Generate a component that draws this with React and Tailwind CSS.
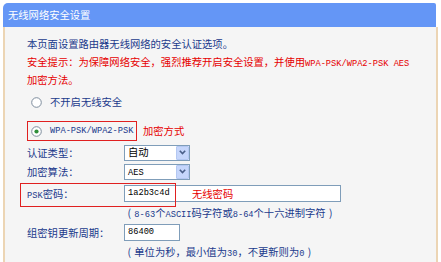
import React from "react";

const L = ({ children }) => (
  <span className="font-['Liberation_Mono',monospace] text-[8.7px] leading-none">{children}</span>
);

const P = ({ children }) => (
  <span className="inline-block w-[10.3px] text-center">{children}</span>
);

const Radio = ({ checked }) => (
  <svg width="11" height="11" viewBox="0 0 11 11" className="shrink-0">
    <circle cx="5.5" cy="5.5" r="4.8" fill="#ffffff" stroke="#7d8c9c" strokeWidth="1" />
    {checked && <circle cx="5.5" cy="5.5" r="2.1" fill="#2f8f3a" />}
  </svg>
);

const Sel = ({ children }) => (
  <div className="w-[66px] h-[16px] border border-[#7f9db9] bg-white flex items-center">
    <span className="flex-1 pl-[3px] text-black leading-none">{children}</span>
    <div className="w-[13px] h-[14px] bg-[#c6d6fb] border border-[#b4c8f2] rounded-[1px] flex items-center justify-center">
      <svg width="7" height="5" viewBox="0 0 7 5">
        <path d="M0.8 0.8 L3.5 3.6 L6.2 0.8" fill="none" stroke="#4a5f88" strokeWidth="1.6" />
      </svg>
    </div>
  </div>
);

export default function App() {
  return (
    <div className="w-[441px] h-[262px] bg-white overflow-hidden font-['Noto_Sans_CJK_SC',sans-serif] text-[10.3px]">
      <div className="ml-[3px] mt-[3px] w-[435px]">
        <div className="w-[433px] h-[24px] bg-[#6496f6] rounded-tl-[5px] rounded-tr-[2px] text-white flex items-center pl-[5px]">
          无线网络安全设置
        </div>
        <div className="h-[235px] bg-[#f5f5f5] border-l-2 border-r-2 border-[#ecd5b4] pl-[22px] pt-[8px] text-[#1b3a8c]">
          <p className="leading-[18px]">本页面设置路由器无线网络的安全认证选项。</p>
          <p className="leading-[18px] text-[#e60000]">
            安全提示：为保障网络安全，强烈推荐开启安全设置，并使用<L>WPA-PSK/WPA2-PSK AES</L>
            <br />
            加密方法。
          </p>

          <div className="mt-[4px] h-[18px] flex items-center pl-[4px] gap-[8px]">
            <Radio />
            <span>不开启无线安全</span>
          </div>

          <div className="mt-[10px] flex items-center">
            <div className="w-[110px] h-[20px] border border-[#e02020] flex items-center pl-[3px] gap-[8px]">
              <Radio checked />
              <L>WPA-PSK/WPA2-PSK</L>
            </div>
            <span className="ml-[6px] text-[#e60000]">加密方式</span>
          </div>

          <div className="mt-[2px] h-[19px] flex items-center">
            <span className="w-[97px]">认证类型：</span>
            <Sel>自动</Sel>
          </div>
          <div className="h-[19px] flex items-center">
            <span className="w-[97px]">加密算法：</span>
            <Sel>
              <L>AES</L>
            </Sel>
          </div>

          <div className="relative mt-[2px] h-[21px] pt-[2px]">
            <div className="h-[17px] flex items-center">
              <span className="w-[97px]">
                <L>PSK</L>密码：
              </span>
              <div className="relative w-[217px] h-[17px] border border-[#7f9db9] bg-white flex items-center pl-[3px] text-black">
                <L>1a2b3c4d</L>
                <span className="absolute left-[67px] top-0 h-full flex items-center text-[#e60000]">无线密码</span>
              </div>
            </div>
            <div className="absolute left-[-7px] top-0 w-[156px] h-[24px] border border-[#e02020] pointer-events-none" />
          </div>

          <div className="h-[17px] leading-[17px] pl-[97px]">
            <P>(</P><L>8-63</L>个<L>ASCII</L>码字符或<L>8-64</L>个十六进制字符<P>)</P>
          </div>

          <div className="mt-[2px] h-[19px] flex items-center">
            <span className="w-[97px]">组密钥更新周期：</span>
            <div className="w-[56px] h-[17px] border border-[#7f9db9] bg-white flex items-center pl-[3px] text-black">
              <L>86400</L>
            </div>
          </div>

          <div className="mt-[1px] h-[17px] leading-[17px] pl-[97px]">
            <P>(</P>单位为秒，最小值为<L>30</L>，不更新则为<L>0</L><P>)</P>
          </div>
        </div>
      </div>
    </div>
  );
}
